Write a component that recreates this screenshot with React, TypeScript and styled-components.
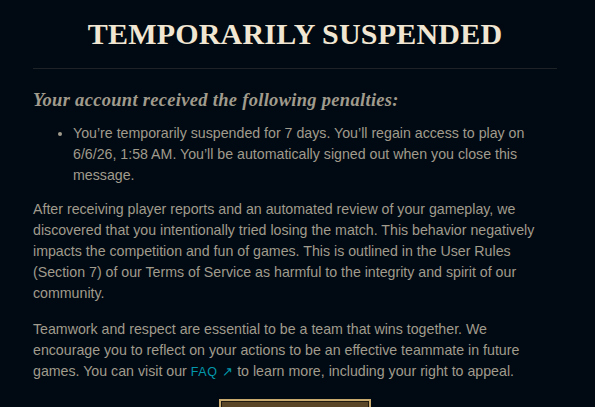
import React from 'react'
import styled, { createGlobalStyle } from 'styled-components'

const GlobalStyle = createGlobalStyle`
  html, body {
    margin: 0;
    padding: 0;
    background: #010a13;
    overflow: hidden;
  }
`

const Modal = styled.div`
  width: 595px;
  height: 407px;
  box-sizing: border-box;
  padding: 0 38px 0 33px;
  background: #010a13;
  display: flex;
  flex-direction: column;
  overflow: hidden;
  & > * {
    flex-shrink: 0;
  }
`

const Title = styled.h1`
  margin: 0;
  padding-top: 17px;
  height: 69px;
  box-sizing: border-box;
  text-align: center;
  font-family: "Liberation Serif", serif;
  font-weight: 700;
  font-size: 30px;
  letter-spacing: 0.2px;
  line-height: 34px;
  color: #f0e6d2;
  border-bottom: 1px solid #1e2328;
`

const Subtitle = styled.h2`
  margin: 20px 0 12px;
  font-family: "Liberation Serif", serif;
  font-style: italic;
  font-weight: 700;
  font-size: 18.5px;
  letter-spacing: 0.3px;
  line-height: 22px;
  color: #a09b8c;
`

const Text = styled.p`
  margin: 0 0 15px;
  font-family: "Liberation Sans", sans-serif;
  font-size: 14.2px;
  line-height: 21px;
  color: #a09b8c;
`

const List = styled.ul`
  margin: 0 0 13px;
  padding-left: 40px;
  font-family: "Liberation Sans", sans-serif;
  font-size: 14.2px;
  line-height: 21px;
  color: #a09b8c;
`

const Link = styled.a`
  color: #0397ab;
  text-decoration: none;
  font-size: 12.5px;
  letter-spacing: 0.6px;
`

const Footer = styled.div`
  display: flex;
  justify-content: center;
  margin-top: 1px;
`

const Button = styled.button`
  flex: none;
  width: 152px;
  height: 34px;
  border: 2px solid #c8aa6e;
  background: #5a4526;
  box-shadow: inset 0 0 0 1px #1e1a12;
  padding: 0;
`

const App: React.FC = () => {
  return (
    <Modal>
      <GlobalStyle />
      <Title>TEMPORARILY SUSPENDED</Title>
      <Subtitle>Your account received the following penalties:</Subtitle>
      <List>
        <li>
          You’re temporarily suspended for 7 days. You’ll regain access to play on 6/6/26, 1:58 AM.
          You’ll be automatically signed out when you close this message.
        </li>
      </List>
      <Text>
        After receiving player reports and an automated review of your gameplay, we discovered that
        you intentionally tried losing the match. This behavior negatively impacts the competition and
        fun of games. This is outlined in the User Rules (Section 7) of our Terms of Service as harmful
        to the integrity and spirit of our community.
      </Text>
      <Text>
        Teamwork and respect are essential to be a team that wins together. We encourage you to
        reflect on your actions to be an effective teammate in future games. You can visit our{' '}
        <Link href="#">FAQ ↗</Link> to learn more, including your right to appeal.
      </Text>
      <Footer>
        <Button />
      </Footer>
    </Modal>
  )
}

export default App
